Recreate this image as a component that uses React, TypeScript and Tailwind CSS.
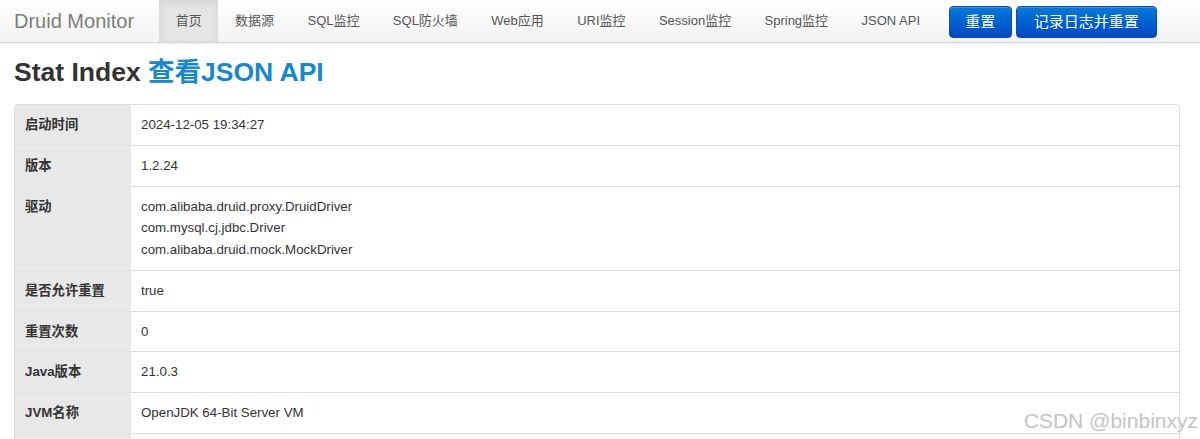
import React from "react";

const font = { fontFamily: '"Liberation Sans", "Noto Sans CJK SC", Arial, sans-serif' };

const navItems = ["首页", "数据源", "SQL监控", "SQL防火墙", "Web应用", "URI监控", "Session监控", "Spring监控", "JSON API"];

const rows: { label: string; value: string[] }[] = [
  { label: "启动时间", value: ["2024-12-05 19:34:27"] },
  { label: "版本", value: ["1.2.24"] },
  {
    label: "驱动",
    value: ["com.alibaba.druid.proxy.DruidDriver", "com.mysql.cj.jdbc.Driver", "com.alibaba.druid.mock.MockDriver"],
  },
  { label: "是否允许重置", value: ["true"] },
  { label: "重置次数", value: ["0"] },
  { label: "Java版本", value: ["21.0.3"] },
  { label: "JVM名称", value: ["OpenJDK 64-Bit Server VM"] },
  { label: "", value: [""] },
];

export default function App() {
  return (
    <div className="relative w-[1200px] h-[439px] overflow-hidden bg-white text-[#333]" style={font}>
      {/* Navbar */}
      <div className="h-[43px] flex items-stretch bg-gradient-to-b from-white to-[#f2f2f2] border-b border-[#d4d4d4] shadow-[0_1px_4px_rgba(0,0,0,0.065)]">
        <div className="w-[159px] pl-[14px] flex items-center text-[20px] text-[#7d7d7d]">Druid Monitor</div>
        <div className="flex items-stretch">
          {navItems.map((item, i) => (
            <div
              key={item}
              className={
                i === 0
                  ? "px-[16.7px] flex items-center text-[13px] text-[#555] bg-[#e5e5e5] shadow-[inset_0_3px_8px_rgba(0,0,0,0.08)]"
                  : "px-[16.7px] flex items-center text-[13px] text-[#555]"
              }
            >
              {item}
            </div>
          ))}
        </div>
        <div className="ml-3 flex items-start pt-[6px] gap-[4px]">
          <button className="h-[32px] px-[15.5px] rounded-[4px] text-white text-[15px] bg-gradient-to-b from-[#0a7ad8] to-[#0047c4] border border-[#0a4fb0] shadow-[inset_0_1px_0_rgba(255,255,255,0.2)]">
            重置
          </button>
          <button className="h-[32px] px-[17px] rounded-[4px] text-white text-[15px] bg-gradient-to-b from-[#0a7ad8] to-[#0047c4] border border-[#0a4fb0] shadow-[inset_0_1px_0_rgba(255,255,255,0.2)]">
            记录日志并重置
          </button>
        </div>
      </div>

      {/* Title */}
      <div className="px-[14px] pt-[9px] mb-[12px] h-[49px]">
        <h3 className="h-[40px] leading-[40px] text-[26.5px] font-bold text-[#333]">
          Stat Index <span className="text-[#1588cf]">查看JSON API</span>
        </h3>
      </div>

      {/* Table */}
      <div className="mx-[14px] w-[1166px] border border-[#dddddd] rounded-[4px] overflow-hidden">
        {rows.map((r, i) => (
          <div key={i} className="flex">
            <div
              className={
                i === 0
                  ? "w-[116px] shrink-0 bg-[#e8e8e8] px-[10px] py-[9px] leading-[21.7px] min-h-[40px] text-[13.3px] font-bold text-[#333]"
                  : "w-[116px] shrink-0 bg-[#e8e8e8] px-[10px] py-[9px] leading-[21.7px] min-h-[40px] text-[13.3px] font-bold text-[#333] border-t border-[#e2e2e2]"
              }
            >
              {r.label}
            </div>
            <div
              className={
                i === 0
                  ? "flex-1 px-[10px] py-[9px] leading-[21.7px] text-[13.3px] text-[#333]"
                  : "flex-1 px-[10px] py-[9px] leading-[21.7px] text-[13.3px] text-[#333] border-t border-[#dddddd]"
              }
            >
              {r.value.map((v, j) => (
                <div key={j}>{v}</div>
              ))}
            </div>
          </div>
        ))}
      </div>

      {/* Watermark */}
      <div className="absolute right-[2px] top-[407px] text-[21px] text-[#c4c4c4] leading-[28px] [text-shadow:0_0_1px_rgba(255,255,255,0.8)]">
        CSDN @binbinxyz
      </div>
    </div>
  );
}
